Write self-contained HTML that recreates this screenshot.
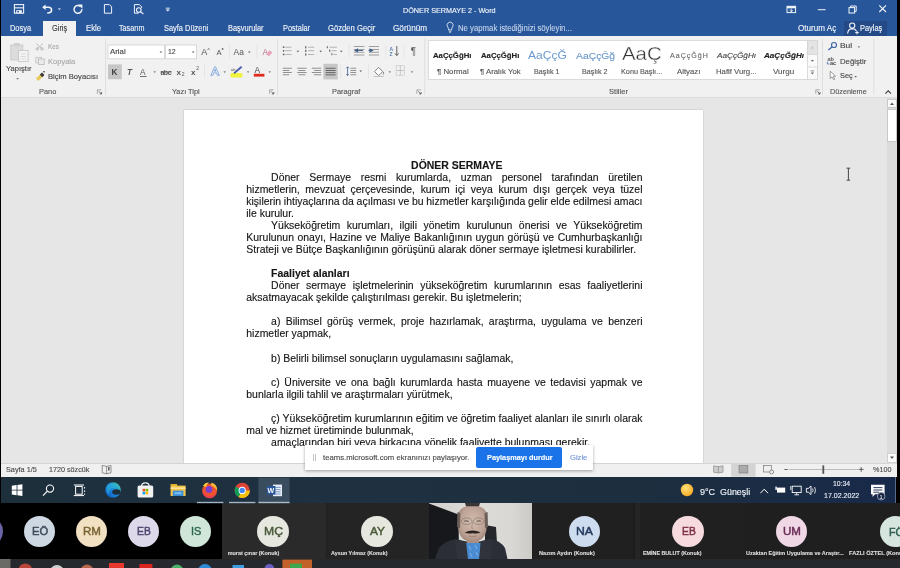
<!DOCTYPE html>
<html><head><meta charset="utf-8"><style>
html,body{margin:0;padding:0;}
body{width:900px;height:568px;overflow:hidden;position:relative;background:#000;font-family:"Liberation Sans", sans-serif;}
#root{position:absolute;left:0;top:0;width:900px;height:568px;overflow:hidden;background:#000;filter:blur(0.4px);}
</style></head><body><div id="root">
<div style="position:absolute;left:1px;top:0px;width:896px;height:36.4px;background:#27569a;"></div>
<div style="position:absolute;left:1px;top:36.4px;width:896px;height:60.6px;background:#f1f1f1;"></div>
<div style="position:absolute;left:1px;top:97.5px;width:896px;height:366px;background:#e6e6e6;"></div>
<div style="position:absolute;left:1px;top:463px;width:896px;height:14px;background:#f0f0f0;"></div>
<div style="position:absolute;left:1px;top:477px;width:895px;height:26.3px;background:linear-gradient(90deg,#1e2f3c 0%,#1f3141 40%,#1d2e3f 72%,#182a4a 100%);"></div>
<div style="position:absolute;left:0px;top:503px;width:900px;height:56px;background:#000;"></div>
<div style="position:absolute;left:222px;top:503px;width:104px;height:56px;background:#2a2a2a;"></div>
<div style="position:absolute;left:325.5px;top:503px;width:1.8px;height:56px;background:#202020;"></div>
<div style="position:absolute;left:327.3px;top:503px;width:102px;height:56px;background:#242424;"></div>
<div style="position:absolute;left:531.6px;top:503px;width:103px;height:56px;background:#202020;"></div>
<div style="position:absolute;left:633px;top:503px;width:2px;height:56px;background:#1b1b1b;"></div>
<div style="position:absolute;left:635px;top:503px;width:5px;height:56px;background:#252525;"></div>
<div style="position:absolute;left:640px;top:503px;width:103px;height:56px;background:#202020;"></div>
<div style="position:absolute;left:743px;top:503px;width:102px;height:56px;background:#1f1f1f;"></div>
<div style="position:absolute;left:845px;top:503px;width:55px;height:56px;background:#1f1f1f;"></div>
<div style="position:absolute;left:0px;top:559px;width:900px;height:9px;background:#25282c;"></div>
<div style="position:absolute;left:843.5px;top:21px;width:43px;height:14.5px;background:#234a86;"></div>
<div style="position:absolute;left:42.5px;top:21px;width:33.2px;height:16px;background:#f1f1f1;"></div>
<div style="position:absolute;left:1px;top:96.6px;width:896px;height:1px;background:#dddddd;"></div>
<div style="position:absolute;left:184px;top:110px;width:519px;height:353px;background:#ffffff;box-shadow:0 0 1.5px rgba(0,0,0,0.25);"></div>
<div style="position:absolute;left:1px;top:462.5px;width:886px;height:0.8px;background:#d4d4d4;"></div>
<div style="position:absolute;left:895px;top:477px;width:1px;height:26px;background:#5a6a88;"></div>
<div style="position:absolute;left:887px;top:97.5px;width:10px;height:366px;background:#dcdcdc;"></div>
<div style="position:absolute;left:887.3px;top:99.3px;width:9.5px;height:9px;background:#fafafa;border:0.6px solid #c8c8c8;box-sizing:border-box;"></div>
<div style="position:absolute;left:887.3px;top:108.6px;width:9.5px;height:33.4px;background:#ffffff;border:0.6px solid #c8c8c8;box-sizing:border-box;"></div>
<div style="position:absolute;left:887.3px;top:453px;width:9.5px;height:9.5px;background:#fafafa;border:0.6px solid #d0d0d0;box-sizing:border-box;"></div>
<div style="position:absolute;left:-27.9px;top:515.6999999999999px;width:31.2px;height:31.2px;background:#6b65a6;border-radius:50%;"></div>
<div style="position:absolute;left:24.1px;top:515.6999999999999px;width:31.2px;height:31.2px;background:#cdd8e3;border-radius:50%;"></div>
<div style="position:absolute;left:76.10000000000001px;top:515.6999999999999px;width:31.2px;height:31.2px;background:#f1e1c2;border-radius:50%;"></div>
<div style="position:absolute;left:128.1px;top:515.6999999999999px;width:31.2px;height:31.2px;background:#ddd8ea;border-radius:50%;"></div>
<div style="position:absolute;left:179.70000000000002px;top:515.6999999999999px;width:31.2px;height:31.2px;background:#d0e6d9;border-radius:50%;"></div>
<div style="position:absolute;left:257.4px;top:515.6999999999999px;width:31.2px;height:31.2px;background:#e6e8df;border-radius:50%;"></div>
<div style="position:absolute;left:361.4px;top:515.6999999999999px;width:31.2px;height:31.2px;background:#e6e8df;border-radius:50%;"></div>
<div style="position:absolute;left:568.6999999999999px;top:515.6999999999999px;width:31.2px;height:31.2px;background:#cddcee;border-radius:50%;"></div>
<div style="position:absolute;left:672.4px;top:515.6999999999999px;width:31.2px;height:31.2px;background:#f6dade;border-radius:50%;"></div>
<div style="position:absolute;left:776.1px;top:515.6999999999999px;width:31.2px;height:31.2px;background:#efd7e6;border-radius:50%;"></div>
<div style="position:absolute;left:879.9px;top:515.9px;width:31.2px;height:31.2px;background:#d6e6df;border-radius:50%;"></div>
<svg style="position:absolute;left:0;top:0" width="900" height="568" viewBox="0 0 900 568"><rect x="0" y="559" width="10.5" height="9" fill="#6a6a66"/><circle cx="25.3" cy="570.5" r="7" fill="#b8443a"/><circle cx="57" cy="572" r="7" fill="#cfcfcf"/><circle cx="87" cy="571" r="6.5" fill="#b8664a"/><rect x="109" y="563" width="15" height="6" fill="#e8372c"/><rect x="139.4" y="564" width="13" height="5" fill="#d8231e"/><circle cx="177" cy="571" r="6.5" fill="#49b06a"/><circle cx="205" cy="571" r="7" fill="#2d8bd6"/><rect x="232.5" y="565" width="11.5" height="4" fill="#3d9be0"/><circle cx="269.4" cy="569" r="5" fill="#6a5cc0"/><rect x="282.4" y="559.6" width="29.6" height="9" fill="#c2622a"/><rect x="290" y="563.6" width="12" height="5" fill="#3ea84c"/></svg>
<div style="position:absolute;left:429.2px;top:503.3px;width:102.4px;height:55.4px;overflow:hidden;background:#d6d5d1;">
<svg width="103" height="56" viewBox="0 0 103 56" style="position:absolute;left:0;top:0;filter:blur(0.6px)">
<defs>
<linearGradient id="wall" x1="0" y1="0" x2="1" y2="0"><stop offset="0" stop-color="#d2d1cd"/><stop offset="0.45" stop-color="#dedcd8"/><stop offset="0.8" stop-color="#d9d8d4"/><stop offset="1" stop-color="#cbcac6"/></linearGradient>
<radialGradient id="face" cx="0.5" cy="0.45" r="0.62"><stop offset="0" stop-color="#d2bcb0"/><stop offset="0.65" stop-color="#bea496"/><stop offset="1" stop-color="#9c8274"/></radialGradient>
</defs>
<rect x="0" y="0" width="103" height="56" fill="url(#wall)"/>
<path d="M0 0.5 L29.5 11.5 L30 56 L0 56 Z" fill="#17181b"/>
<path d="M56 22 L67 24 L68 40 L56 40 Z" fill="#26272b"/>
<path d="M6 56 L10 45 Q16 38 27 36 L37 38.5 L51 38.5 L61 35.5 Q72 38 76 45 L78.5 56 Z" fill="#2b2e36"/>
<path d="M36.6 40 L51.8 40 L51 56 L37.4 56 Z" fill="#4a8cd2"/>
<path d="M40 43 L42 47 M46 42 L48 46 M41 50 L43 54 M47 49 L49 53" stroke="#8fbbe8" stroke-width="0.8"/>
<path d="M26 37 L37 39 L39 56 L28 56 Z M62 36 L51.8 39 L50 56 L62 56 Z" fill="#30333b"/>
<path d="M38 33 L50 33 L50 40 L38 40 Z" fill="#a88e80"/>
<path d="M29 14 Q29 2.5 43.5 2.5 Q58 2.5 58 14 L57.4 27 Q55.5 38.5 43.5 38.8 Q31.5 38.5 29.6 27 Z" fill="url(#face)"/>
<path d="M36 0 L51 0 L50 3.2 L37 3.2 Z" fill="#3c3636"/>
<path d="M28.4 9 L28 24 L31 25 L31.4 10 Z M58.6 9 L59 24 L56 25 L55.6 10 Z" fill="#6a5e58"/>
<ellipse cx="37.6" cy="18.2" rx="5.4" ry="3.3" fill="none" stroke="#8c7a70" stroke-width="0.7"/>
<ellipse cx="49.6" cy="18.2" rx="5.4" ry="3.3" fill="none" stroke="#8c7a70" stroke-width="0.7"/>
<path d="M35.4 18.2 Q37.6 17.2 39.6 18.4 M47.6 18.4 Q49.6 17.2 51.8 18.2" stroke="#5a4a44" stroke-width="1" fill="none"/>
<path d="M43.6 19 L42.6 25 L44.6 25.4" stroke="#a08476" stroke-width="0.7" fill="none"/>
<path d="M35.6 29.6 Q43.6 25.4 51.6 29.6 Q48 31 43.6 30.2 Q39 31 35.6 29.6 Z" fill="#2c2321"/>
<path d="M39.5 33 Q43.6 34.2 47.8 33" stroke="#8f7465" stroke-width="0.7" fill="none"/>
</svg></div>
<svg style="position:absolute;left:889px;top:101px" width="6" height="5" viewBox="0 0 6 5"><path d="M1 4 L3 1.5 L5 4 Z" fill="#555"/></svg>
<svg style="position:absolute;left:889px;top:455px" width="6" height="5" viewBox="0 0 6 5"><path d="M1 1.5 L3 4 L5 1.5 Z" fill="#555"/></svg>
<svg style="position:absolute;left:0;top:0" width="900" height="100" viewBox="0 0 900 100"><rect x="14.4" y="4.6" width="9.2" height="8.6" fill="none" stroke="#f2f5fb" stroke-width="1.1"/><rect x="14.4" y="7.3" width="9.2" height="1.1" fill="#f2f5fb"/><rect x="16.2" y="10.2" width="5.6" height="3" fill="#f2f5fb"/><rect x="17.3" y="11" width="1.6" height="1.4" fill="#27569a"/><path d="M43.5 7.3 L48.3 7.3 Q51.6 7.3 51.6 10.1 Q51.6 12.9 48.3 12.9 L47.2 12.9" fill="none" stroke="#f2f5fb" stroke-width="1.5"/><path d="M42.2 7.3 L45.6 4.6 L45.6 10 Z" fill="#f2f5fb"/><path d="M57.8 8.4 L61 8.4 L59.4 10 Z" fill="#f2f5fb"/><path d="M80.6 6.6 A3.9 3.9 0 1 0 81.8 9.2" fill="none" stroke="#f2f5fb" stroke-width="1.5"/><path d="M78.2 4.6 L82.4 4.6 L82.4 8.8 Z" fill="#f2f5fb"/><path d="M104.4 4.6 L109.4 4.6 L111.6 6.8 L111.6 13.2 L104.4 13.2 Z" fill="none" stroke="#f2f5fb" stroke-width="1"/><path d="M138.6 13.2 L134.4 13.2 L134.4 4.6 L139.4 4.6 L141.6 6.8 L141.6 8" fill="none" stroke="#f2f5fb" stroke-width="1"/><circle cx="138.8" cy="10" r="2.3" fill="none" stroke="#f2f5fb" stroke-width="1.1"/><path d="M140.4 11.6 L143.4 14" stroke="#f2f5fb" stroke-width="1.2"/><rect x="165.8" y="7.7" width="4" height="0.9" fill="#f2f5fb"/><path d="M165.6 9.4 L169.9 9.4 L167.75 11.4 Z" fill="#f2f5fb"/><rect x="787" y="6.3" width="8.6" height="6.3" fill="none" stroke="#f2f5fb" stroke-width="1"/><rect x="787" y="6.3" width="8.6" height="2" fill="#f2f5fb"/><path d="M791.3 8.5 L791.3 12.4" stroke="#f2f5fb" stroke-width="0.8"/><path d="M789.6 10.2 L791.3 11.6 L793 10.2" fill="none" stroke="#f2f5fb" stroke-width="0.8"/><rect x="817.8" y="9.2" width="7.8" height="1" fill="#f2f5fb"/><rect x="849" y="7.6" width="5.6" height="5.4" fill="none" stroke="#f2f5fb" stroke-width="1"/><path d="M850.6 7.6 L850.6 6 L856.2 6 L856.2 11.4 L854.6 11.4" fill="none" stroke="#f2f5fb" stroke-width="1"/><path d="M879.3 5.3 L886 12 M886 5.3 L879.3 12" stroke="#f2f5fb" stroke-width="1.1"/><circle cx="852.2" cy="25.6" r="2.6" fill="none" stroke="#f2f5fb" stroke-width="1.1"/><path d="M847.6 33.6 Q848 28.8 852.2 28.6 Q855.4 28.8 856.4 31" fill="none" stroke="#f2f5fb" stroke-width="1.1"/><path d="M855.2 32.6 L858.8 32.6 M857 30.8 L857 34.4" stroke="#f2f5fb" stroke-width="1"/><path d="M448.6 30 Q448.6 28 447.6 26.8 A3 3 0 1 1 452.6 26.8 Q451.6 28 451.6 30 Z" fill="none" stroke="#dfe7f3" stroke-width="0.9"/><path d="M448.8 31.2 L451.4 31.2 M449.2 32.3 L451 32.3" stroke="#dfe7f3" stroke-width="0.8"/></svg>
<svg style="position:absolute;left:0;top:0" width="900" height="100" viewBox="0 0 900 100"><rect x="10.8" y="45" width="12" height="15" fill="#dcdcdc" stroke="#c6c6c6" stroke-width="0.8"/><rect x="14" y="43" width="5.6" height="3.4" fill="#cfcfcf" rx="1"/><rect x="18.5" y="50.5" width="9.6" height="11" fill="#f4f4f4" stroke="#c3c3c3" stroke-width="0.8"/><path d="M20.5 54 H26 M20.5 56.5 H26 M20.5 59 H26" stroke="#d0d0d0" stroke-width="0.7"/><path d="M16.2 78.2 L19 78.2 L17.6 79.6 Z" fill="#555555"/><path d="M36.2 43.5 L43 49.8 M43 43.5 L36.2 49.8" stroke="#b8b8b8" stroke-width="0.9"/><circle cx="37.3" cy="48.9" r="1.3" fill="none" stroke="#b8b8b8" stroke-width="0.8"/><circle cx="42" cy="48.9" r="1.3" fill="none" stroke="#b8b8b8" stroke-width="0.8"/><rect x="35.8" y="57.3" width="5.8" height="5.6" fill="#ececec" stroke="#c0c0c0" stroke-width="0.8"/><rect x="38.4" y="59" width="5.8" height="5.4" fill="#ececec" stroke="#b8b8b8" stroke-width="0.8"/><path d="M36 78.5 L41.6 73 L44 75.4 L38.4 81 Z" fill="#e8c95a"/><path d="M39.8 74.8 L42 72.6 L44.4 75 L42.2 77.2 Z" fill="#3a3a3a"/><path d="M43 71.8 L45 71.8" stroke="#3a3a3a" stroke-width="1"/><path d="M97.4 93.8 L97.4 89.8 L101.4 89.8" fill="none" stroke="#777" stroke-width="0.6"/><path d="M98.9 91.3 L101.60000000000001 94 M101.60000000000001 92 L101.60000000000001 94 L99.60000000000001 94" fill="none" stroke="#555" stroke-width="0.8"/><path d="M269.6 93.8 L269.6 89.8 L273.6 89.8" fill="none" stroke="#777" stroke-width="0.6"/><path d="M271.1 91.3 L273.8 94 M273.8 92 L273.8 94 L271.8 94" fill="none" stroke="#555" stroke-width="0.8"/><path d="M416.9 93.8 L416.9 89.8 L420.9 89.8" fill="none" stroke="#777" stroke-width="0.6"/><path d="M418.4 91.3 L421.09999999999997 94 M421.09999999999997 92 L421.09999999999997 94 L419.09999999999997 94" fill="none" stroke="#555" stroke-width="0.8"/><path d="M815.8 93.8 L815.8 89.8 L819.8 89.8" fill="none" stroke="#777" stroke-width="0.6"/><path d="M817.3 91.3 L820.0 94 M820.0 92 L820.0 94 L818.0 94" fill="none" stroke="#555" stroke-width="0.8"/><rect x="105" y="39" width="0.8" height="56" fill="#dadada"/><rect x="277.2" y="39" width="0.8" height="56" fill="#dadada"/><rect x="424.4" y="39" width="0.8" height="56" fill="#dadada"/><rect x="822.2" y="39" width="0.8" height="56" fill="#dadada"/><rect x="873.5" y="39" width="0.8" height="56" fill="#dadada"/><rect x="108" y="45" width="56.5" height="13.8" fill="#fff" stroke="#d0d0d0" stroke-width="0.8"/><rect x="165.6" y="45" width="31" height="13.8" fill="#fff" stroke="#d0d0d0" stroke-width="0.8"/><path d="M159.6 51.6 L162.2 51.6 L160.9 53.0 Z" fill="#555555"/><path d="M191.9 51.6 L194.5 51.6 L193.20000000000002 53.0 Z" fill="#555555"/><text x="201.2" y="55.2" font-size="9" font-family="Liberation Sans" fill="#555555">A</text><path d="M207.6 49.8 L208.6 48.4 L209.6 49.8" fill="none" stroke="#555555" stroke-width="0.7"/><text x="216.6" y="55.2" font-size="7.6" font-family="Liberation Sans" fill="#555555">A</text><path d="M221.6 49 L223.6 49 M222.6 48 L222.6 50" stroke="#555555" stroke-width="0.7"/><rect x="229.2" y="45" width="0.6" height="13" fill="#dedede"/><rect x="256.6" y="45" width="0.6" height="13" fill="#dedede"/><rect x="204.2" y="64" width="0.6" height="14" fill="#dedede"/><text x="233.6" y="55" font-size="8.4" font-family="Liberation Sans" fill="#555555">Aa</text><path d="M248 51.6 L250.6 51.6 L249.3 53 Z" fill="#555555"/><text x="262.4" y="55" font-size="8.4" font-family="Liberation Sans" fill="#b76f86">A</text><path d="M266 54.8 L269.4 50.2 L272.4 52.4 L269.4 56 Z" fill="#e6a5b9"/><rect x="108" y="64.4" width="13.8" height="14.8" fill="#c6c6c6"/><text x="111.4" y="75.2" font-size="8.2" font-weight="bold" font-family="Liberation Sans" fill="#3f3f3f">K</text><text x="127" y="75.2" font-size="8.2" font-style="italic" font-weight="bold" font-family="Liberation Sans" fill="#555555">T</text><text x="140" y="74.6" font-size="8.2" font-family="Liberation Sans" fill="#555555">A</text><rect x="140" y="76" width="6.6" height="0.8" fill="#555555"/><path d="M153.4 71.4 L156 71.4 L154.7 72.8 Z" fill="#555555"/><text x="160.4" y="74.6" font-size="7" font-weight="bold" font-family="Liberation Sans" fill="#555555" textLength="11.2">abc</text><rect x="160.4" y="71.6" width="11.4" height="0.7" fill="#555555"/><text x="176.6" y="74.8" font-size="8" font-weight="bold" font-family="Liberation Sans" fill="#555555">x</text><text x="181.8" y="76.4" font-size="5" font-family="Liberation Sans" fill="#555555">2</text><text x="191" y="74.8" font-size="8" font-weight="bold" font-family="Liberation Sans" fill="#555555">x</text><text x="196.2" y="70" font-size="5" font-family="Liberation Sans" fill="#555555">2</text><path d="M210.8 75.4 L214.6 66.8 L215.6 66.8 L219.4 75.4 L217.4 75.4 L216.4 72.8 L213.8 72.8 L212.8 75.4 Z M214.4 71.2 L215.8 71.2 L215.1 69.2 Z" fill="#e6eef8" stroke="#6d9bd4" stroke-width="0.75" stroke-linejoin="round"/><path d="M223.4 71.4 L226 71.4 L224.7 72.8 Z" fill="#555"/><rect x="230.4" y="73" width="12" height="4.4" fill="#f2f23a" rx="1.5"/><path d="M234 73.4 L241.6 66.8" stroke="#4a5aa8" stroke-width="1.8"/><text x="230.8" y="70.6" font-size="4.2" font-family="Liberation Sans" fill="#555">ab</text><path d="M246.8 71.4 L249.4 71.4 L248.1 72.8 Z" fill="#555"/><text x="254.6" y="73.2" font-size="8.4" font-family="Liberation Sans" fill="#444">A</text><rect x="253.8" y="73.8" width="10.6" height="2.8" fill="#e02a1e"/><path d="M268.4 71.4 L271 71.4 L269.7 72.8 Z" fill="#555"/><circle cx="283.6" cy="47.2" r="0.9" fill="#666"/><circle cx="283.6" cy="50.800000000000004" r="0.9" fill="#666"/><circle cx="283.6" cy="54.400000000000006" r="0.9" fill="#666"/><rect x="285.4" y="46.8" width="6.2" height="0.7" fill="#9a9a9a"/><rect x="285.4" y="50.4" width="6.2" height="0.7" fill="#9a9a9a"/><rect x="285.4" y="54.0" width="6.2" height="0.7" fill="#9a9a9a"/><path d="M296.6 50.8 L299.2 50.8 L297.9 52.2 Z" fill="#555"/><rect x="305" y="46.2" width="1.4" height="2.2" fill="#777"/><rect x="305" y="49.800000000000004" width="1.4" height="2.2" fill="#777"/><rect x="305" y="53.400000000000006" width="1.4" height="2.2" fill="#777"/><rect x="308" y="46.8" width="6.2" height="0.7" fill="#9a9a9a"/><rect x="308" y="50.4" width="6.2" height="0.7" fill="#9a9a9a"/><rect x="308" y="54.0" width="6.2" height="0.7" fill="#9a9a9a"/><path d="M319.4 50.8 L322 50.8 L320.7 52.2 Z" fill="#555"/><rect x="326.8" y="46.2" width="1.2" height="2" fill="#777"/><rect x="329.4" y="46.8" width="7.4" height="0.7" fill="#9a9a9a"/><rect x="329" y="49.6" width="1.3" height="2.2" fill="#777"/><rect x="331.6" y="50.4" width="5" height="0.7" fill="#9a9a9a"/><rect x="331.2" y="53.2" width="1.2" height="2" fill="#777"/><rect x="333.4" y="54" width="3.4" height="0.7" fill="#9a9a9a"/><path d="M340 50.8 L342.6 50.8 L341.3 52.2 Z" fill="#555"/><rect x="348.8" y="45" width="0.6" height="13" fill="#dedede"/><rect x="385.6" y="45" width="0.6" height="13" fill="#dedede"/><rect x="403.8" y="45" width="0.6" height="13" fill="#dedede"/><rect x="353.8" y="46.2" width="10.6" height="0.8" fill="#8a8a8a"/><rect x="353.8" y="49.0" width="10.6" height="0.8" fill="#8a8a8a"/><rect x="353.8" y="51.800000000000004" width="10.6" height="0.8" fill="#8a8a8a"/><rect x="353.8" y="54.6" width="10.6" height="0.8" fill="#8a8a8a"/><path d="M354 50.4 L358 48.2 L358 52.6 Z" fill="#3d5f8f"/><rect x="357" y="50" width="6" height="0.9" fill="#3d5f8f"/><rect x="368.8" y="46.2" width="10.2" height="0.8" fill="#8a8a8a"/><rect x="368.8" y="49.0" width="10.2" height="0.8" fill="#8a8a8a"/><rect x="368.8" y="51.800000000000004" width="10.2" height="0.8" fill="#8a8a8a"/><rect x="368.8" y="54.6" width="10.2" height="0.8" fill="#8a8a8a"/><path d="M373.6 50.4 L369.6 48.2 L369.6 52.6 Z" fill="#3d5f8f"/><rect x="368.6" y="50" width="4" height="0.9" fill="#3d5f8f"/><text x="389.4" y="50.6" font-size="5" font-weight="bold" font-family="Liberation Sans" fill="#5a7bb0">A</text><text x="389.6" y="56" font-size="5" font-weight="bold" font-family="Liberation Sans" fill="#5a7bb0">Z</text><path d="M396.8 46 L396.8 55.4 M395 53.4 L396.8 55.6 L398.6 53.4" fill="none" stroke="#555" stroke-width="0.9"/><text x="410.8" y="55.4" font-size="10" font-family="Liberation Sans" fill="#5a5a5a">¶</text><rect x="282.8" y="67.8" width="9" height="0.8" fill="#7a7a7a"/><rect x="282.8" y="70" width="6.4" height="0.8" fill="#7a7a7a"/><rect x="282.8" y="72.2" width="9" height="0.8" fill="#7a7a7a"/><rect x="282.8" y="74.4" width="6.4" height="0.8" fill="#7a7a7a"/><rect x="297.2" y="67.8" width="9.4" height="0.8" fill="#7a7a7a"/><rect x="298.4" y="70" width="7" height="0.8" fill="#7a7a7a"/><rect x="297.2" y="72.2" width="9.4" height="0.8" fill="#7a7a7a"/><rect x="298.4" y="74.4" width="7" height="0.8" fill="#7a7a7a"/><rect x="311.8" y="67.8" width="9.4" height="0.8" fill="#7a7a7a"/><rect x="314" y="70" width="7.2" height="0.8" fill="#7a7a7a"/><rect x="311.8" y="72.2" width="9.4" height="0.8" fill="#7a7a7a"/><rect x="314" y="74.4" width="7.2" height="0.8" fill="#7a7a7a"/><rect x="323.4" y="63.8" width="14.4" height="15.6" fill="#c6c6c6"/><rect x="325.6" y="67.8" width="10" height="0.9" fill="#5a5a5a"/><rect x="325.6" y="70.0" width="10" height="0.9" fill="#5a5a5a"/><rect x="325.6" y="72.2" width="10" height="0.9" fill="#5a5a5a"/><rect x="325.6" y="74.39999999999999" width="10" height="0.9" fill="#5a5a5a"/><rect x="340" y="64" width="0.6" height="14" fill="#dedede"/><rect x="368.2" y="64" width="0.6" height="14" fill="#dedede"/><path d="M347.6 67 L347.6 75.4 M346.4 68.2 L347.6 66.8 L348.8 68.2 M346.4 74.2 L347.6 75.6 L348.8 74.2" fill="none" stroke="#3d5f8f" stroke-width="0.8"/><rect x="350.4" y="67.8" width="5.8" height="0.8" fill="#7a7a7a"/><rect x="350.4" y="70.0" width="5.8" height="0.8" fill="#7a7a7a"/><rect x="350.4" y="72.2" width="5.8" height="0.8" fill="#7a7a7a"/><rect x="350.4" y="74.39999999999999" width="5.8" height="0.8" fill="#7a7a7a"/><path d="M359.4 70.6 L362 70.6 L360.7 72 Z" fill="#555"/><path d="M374.6 71.6 L378.6 67.4 L382.8 71.6 L378.6 75.6 Z" fill="#fff" stroke="#666" stroke-width="0.8"/><path d="M383.4 72 Q384 74 383.2 74.6" stroke="#666" stroke-width="0.8" fill="none"/><rect x="373.4" y="76" width="10.6" height="0.8" fill="#bbb"/><path d="M388.4 71.4 L391 71.4 L389.7 72.8 Z" fill="#555"/><rect x="396.2" y="65.6" width="8.2" height="9.8" fill="none" stroke="#aaa" stroke-width="0.6" stroke-dasharray="1 0.6"/><path d="M400.3 65.6 V75.4 M396.2 70.5 H404.4" stroke="#aaa" stroke-width="0.6"/><path d="M410.6 71.4 L413.2 71.4 L411.9 72.8 Z" fill="#555"/><rect x="428.4" y="40.6" width="389" height="38.8" fill="#fff" stroke="#d4d4d4" stroke-width="0.8"/><rect x="807.4" y="40.6" width="10" height="38.8" fill="#fafafa" stroke="#d4d4d4" stroke-width="0.8"/><rect x="807.4" y="40.6" width="10" height="13.8" fill="#e4e4e4" stroke="#d4d4d4" stroke-width="0.8"/><path d="M807.4 67 H817.4" stroke="#d4d4d4" stroke-width="0.8"/><path d="M810.8 48.4 L812.4 46.6 L814 48.4 Z" fill="#bbb"/><path d="M810.8 60 L814 60 L812.4 61.8 Z" fill="#666"/><rect x="810.6" y="70.6" width="3.6" height="0.7" fill="#666"/><path d="M810.8 72.6 L814 72.6 L812.4 74.4 Z" fill="#666"/><circle cx="834" cy="45" r="2.5" fill="none" stroke="#3f69a6" stroke-width="1.2"/><path d="M832.2 46.8 L828.4 50" stroke="#3f69a6" stroke-width="1.5"/><path d="M857.6 46.4 L860.2 46.4 L858.9 47.8 Z" fill="#555"/><text x="827.4" y="60.6" font-size="5.6" font-weight="bold" font-family="Liberation Sans" fill="#5a5a5a">ab</text><text x="830" y="65.2" font-size="5.6" font-weight="bold" font-family="Liberation Sans" fill="#4a4a4a">ac</text><path d="M827.4 61.6 L827.4 64 L829.4 64" fill="none" stroke="#3f69a6" stroke-width="0.8"/><path d="M830.2 71.2 L830.2 78.6 L832 76.8 L833.6 79.8 L834.8 79.2 L833.2 76.2 L835.6 76.2 Z" fill="#fff" stroke="#777" stroke-width="0.7"/><path d="M854.4 76 L857 76 L855.7 77.4 Z" fill="#555"/><path d="M885.4 93.6 L888.2 90.8 L891 93.6" fill="none" stroke="#444" stroke-width="1.1"/></svg>
<svg style="position:absolute;left:0;top:0" width="900" height="568" viewBox="0 0 900 568"><path d="M848.4 168.4 V180 M846.6 168.2 H850.2 M846.6 180.2 H850.2" stroke="#333" stroke-width="0.9"/><path d="M102.2 465.4 L106.6 466.4 L106.6 473.8 L102.2 472.8 Z M106.6 466.4 L111 465.4 L111 472.8 L106.6 473.8" fill="none" stroke="#777" stroke-width="0.8"/><rect x="108" y="467" width="1.6" height="3.6" fill="#666"/><rect x="731.2" y="463.2" width="24.4" height="13.5" fill="#d4d4d4"/><path d="M713.6 465.8 L718.3 466.6 L718.3 473 L713.6 472.2 Z M718.3 466.6 L723 465.8 L723 472.2 L718.3 473" fill="#ccc" stroke="#8a8a8a" stroke-width="0.7"/><rect x="739" y="465.6" width="8.8" height="7.4" fill="#aaa" stroke="#777" stroke-width="0.6"/><rect x="763.4" y="465.6" width="8" height="6.4" fill="#eee" stroke="#777" stroke-width="0.7"/><circle cx="771.6" cy="472" r="2" fill="#eee" stroke="#666" stroke-width="0.7"/><rect x="784.4" y="469" width="3.4" height="0.9" fill="#555"/><rect x="789" y="469.2" width="69.6" height="0.6" fill="#9a9a9a"/><rect x="822.4" y="465.4" width="1.8" height="8.4" fill="#555"/><path d="M858.8 469.4 H863.6 M861.2 467 V471.8" stroke="#555" stroke-width="0.9"/></svg>
<svg style="position:absolute;left:0;top:0" width="900" height="568" viewBox="0 0 900 568"><path d="M11.8 485.8 L16.6 485 L16.6 489.8 L11.8 489.8 Z M17.4 484.9 L22.4 484.2 L22.4 489.8 L17.4 489.8 Z M11.8 490.6 L16.6 490.6 L16.6 495.2 L11.8 494.6 Z M17.4 490.6 L22.4 490.6 L22.4 496 L17.4 495.3 Z" fill="#ffffff"/><circle cx="50" cy="488.6" r="3.6" fill="none" stroke="#ffffff" stroke-width="1.1"/><path d="M47.4 491.2 L43 495.6" stroke="#ffffff" stroke-width="1.2"/><rect x="75.6" y="486.4" width="6.6" height="7.8" fill="none" stroke="#ffffff" stroke-width="1"/><path d="M73.8 485 H84 M73.8 495.6 H84 M84.6 487 V488.6 M84.6 490.4 V492 M84.6 493.6 V494.8" stroke="#ffffff" stroke-width="1"/><defs><linearGradient id="edg" x1="0" y1="0" x2="1" y2="1"><stop offset="0" stop-color="#38c98b"/><stop offset="0.5" stop-color="#1d9bd8"/><stop offset="1" stop-color="#1660c2"/></linearGradient><radialGradient id="ff" cx="0.5" cy="0.5" r="0.55"><stop offset="0" stop-color="#8e3fcf"/><stop offset="0.35" stop-color="#e8356a"/><stop offset="0.7" stop-color="#ff7a2a"/><stop offset="1" stop-color="#ffc43a"/></radialGradient></defs><defs><linearGradient id="edg2" x1="0" y1="1" x2="1" y2="0"><stop offset="0" stop-color="#0d52b8"/><stop offset="0.55" stop-color="#1d8fe0"/><stop offset="1" stop-color="#52d07a"/></linearGradient></defs><circle cx="113" cy="490" r="7.8" fill="url(#edg2)"/><ellipse cx="116.4" cy="492" rx="4.2" ry="2.8" fill="#1c2d37"/><path d="M106.5 487 Q110 482.8 115 483.6 Q119.5 484.8 120.6 489 Q116 486.5 111.5 488.6 Q108.5 490.4 108.8 494.6 Q106 492 106.5 487 Z" fill="#2fb6d8" opacity="0.55"/><rect x="137.6" y="485.6" width="15.6" height="12" rx="1.5" fill="#f2f2f2"/><path d="M141.6 486 Q141.6 482.8 145.4 482.8 Q149.2 482.8 149.2 486" fill="none" stroke="#f2f2f2" stroke-width="1.2"/><rect x="142.6" y="488.8" width="2.6" height="2.6" fill="#f25022"/><rect x="145.6" y="488.8" width="2.6" height="2.6" fill="#7fba00"/><rect x="142.6" y="491.8" width="2.6" height="2.6" fill="#00a4ef"/><rect x="145.6" y="491.8" width="2.6" height="2.6" fill="#ffb900"/><rect x="170.6" y="484" width="6.5" height="2.2" fill="#e0ac2c"/><rect x="170.6" y="485.6" width="15" height="10.4" fill="#f3c54a"/><rect x="170.6" y="487.4" width="15" height="1.6" fill="#fbe39a"/><rect x="172.8" y="490.6" width="10.6" height="5.4" fill="#3d8fd6"/><rect x="174.6" y="492.2" width="7" height="2" fill="#7cc0f0"/><circle cx="209.6" cy="490.8" r="7.4" fill="#f0522e"/><path d="M202.2 490.8 A7.4 7.4 0 0 0 217 490.8 Q216.6 494.6 212 496 Q206 497 203.4 492 Z" fill="#e8336a" opacity="0.6"/><path d="M211.5 482.6 Q217.6 484.6 217.2 491 Q215 486.4 211 486 Z" fill="#ffb636"/><circle cx="209" cy="489.4" r="3.4" fill="#7a3ed2"/><path d="M203 486 Q205 482.5 209 482.6 Q206.4 484.4 206.4 487 Z" fill="#ffc940"/><rect x="197" y="501.8" width="26.4" height="1.4" fill="#9fb4c6"/><circle cx="242.2" cy="490.4" r="7.6" fill="#db4437"/><path d="M242.2 490.4 L249.8 490.4 A7.6 7.6 0 0 1 238.4 497 Z" fill="#f4c20d"/><path d="M242.2 490.4 L238.4 497 A7.6 7.6 0 0 1 235.6 486.6 Z" fill="#0f9d58"/><circle cx="242.2" cy="490.4" r="3.6" fill="#fff"/><circle cx="242.2" cy="490.4" r="2.7" fill="#4285f4"/><rect x="229" y="501.8" width="26.4" height="1.4" fill="#9fb4c6"/><rect x="258.4" y="477.6" width="31.2" height="25" fill="#3a4d5e"/><rect x="258.4" y="501.8" width="31.2" height="1.4" fill="#a9bccc"/><rect x="273" y="484.6" width="9" height="11.6" fill="#e8eef6"/><path d="M274.6 487.4 H280.6 M274.6 489.6 H280.6 M274.6 491.8 H280.6 M274.6 494 H280.6" stroke="#5b82c2" stroke-width="0.8"/><rect x="266.8" y="486" width="8.6" height="8.6" fill="#2b579a"/><text x="267.4" y="493.4" font-size="7" font-weight="bold" font-family="Liberation Sans" fill="#fff">W</text><defs><radialGradient id="sun" cx="0.4" cy="0.35" r="0.7"><stop offset="0" stop-color="#ffe27a"/><stop offset="1" stop-color="#f5a623"/></radialGradient></defs><circle cx="687" cy="490" r="6.2" fill="url(#sun)"/><path d="M760.4 493.2 L764.2 489.2 L768 493.2" fill="none" stroke="#ffffff" stroke-width="1"/><rect x="777" y="487.6" width="8.2" height="5" fill="#ffffff"/><rect x="775.4" y="486.6" width="1.4" height="3.4" fill="#ffffff"/><rect x="792.2" y="486.2" width="9" height="6.4" fill="none" stroke="#ffffff" stroke-width="0.9"/><path d="M796.7 492.6 V494.6 M794.4 494.8 H799" stroke="#ffffff" stroke-width="0.9"/><path d="M790.8 486 L790.8 490" stroke="#ffffff" stroke-width="0.9"/><path d="M806.4 488.4 H808.4 L811 486 V494.6 L808.4 492.2 H806.4 Z" fill="none" stroke="#ffffff" stroke-width="0.9"/><path d="M812.6 488.4 Q813.6 490.3 812.6 492.2 M814.6 487 Q816.4 490.3 814.6 493.6" fill="none" stroke="#ffffff" stroke-width="0.8"/><path d="M871 484.8 H884.6 V494.2 H875 L872.6 497 V494.2 H871 Z" fill="#ffffff"/><path d="M873.4 487.6 H882.4 M873.4 490 H882.4 M873.4 492.2 H879" stroke="#1a2846" stroke-width="0.9"/><circle cx="881.2" cy="496.2" r="3.8" fill="#1a2846" stroke="#9aa3b5" stroke-width="0.9"/><text x="879.6" y="498.8" font-size="5.6" font-family="Liberation Sans" fill="#fff">1</text></svg>
<div id="t53" style="position:absolute;left:32.05px;top:526.000px;font-size:10.89px;line-height:10.89px;color:#3d4b5a;font-weight:normal;font-style:normal;white-space:nowrap;transform:scaleX(1.0305);transform-origin:0 0;-webkit-text-stroke:0.45px #3d4b5a;">EÖ</div>
<div id="t54" style="position:absolute;left:83.20px;top:526.000px;font-size:10.89px;line-height:10.89px;color:#7a6233;font-weight:normal;font-style:normal;white-space:nowrap;transform:scaleX(1.0592);transform-origin:0 0;-webkit-text-stroke:0.45px #7a6233;">RM</div>
<div id="t55" style="position:absolute;left:137.20px;top:526.000px;font-size:10.89px;line-height:10.89px;color:#4d4670;font-weight:normal;font-style:normal;white-space:nowrap;transform:scaleX(0.9528);transform-origin:0 0;-webkit-text-stroke:0.45px #4d4670;">EB</div>
<div id="t56" style="position:absolute;left:190.55px;top:526.000px;font-size:10.89px;line-height:10.89px;color:#2f6a4e;font-weight:normal;font-style:normal;white-space:nowrap;transform:scaleX(1.0096);transform-origin:0 0;-webkit-text-stroke:0.45px #2f6a4e;">IS</div>
<div id="t57" style="position:absolute;left:264.00px;top:526.000px;font-size:10.89px;line-height:10.89px;color:#4a5a3a;font-weight:normal;font-style:normal;white-space:nowrap;transform:scaleX(1.1215);transform-origin:0 0;-webkit-text-stroke:0.45px #4a5a3a;">MÇ</div>
<div id="t58" style="position:absolute;left:370.00px;top:526.000px;font-size:10.89px;line-height:10.89px;color:#4a5a3a;font-weight:normal;font-style:normal;white-space:nowrap;transform:scaleX(1.0911);transform-origin:0 0;-webkit-text-stroke:0.45px #4a5a3a;">AY</div>
<div id="t59" style="position:absolute;left:576.30px;top:526.000px;font-size:10.89px;line-height:10.89px;color:#233a5e;font-weight:normal;font-style:normal;white-space:nowrap;transform:scaleX(1.1238);transform-origin:0 0;-webkit-text-stroke:0.45px #233a5e;">NA</div>
<div id="t60" style="position:absolute;left:681.50px;top:526.000px;font-size:10.89px;line-height:10.89px;color:#7d2f47;font-weight:normal;font-style:normal;white-space:nowrap;transform:scaleX(0.9528);transform-origin:0 0;-webkit-text-stroke:0.45px #7d2f47;">EB</div>
<div id="t61" style="position:absolute;left:783.20px;top:526.000px;font-size:10.89px;line-height:10.89px;color:#6b2d56;font-weight:normal;font-style:normal;white-space:nowrap;transform:scaleX(1.0592);transform-origin:0 0;-webkit-text-stroke:0.45px #6b2d56;">UM</div>
<div id="t62" style="position:absolute;left:888.50px;top:527.000px;font-size:10.89px;line-height:10.89px;color:#2f5d4f;font-weight:normal;font-style:normal;white-space:nowrap;transform:scaleX(0.9833);transform-origin:0 0;-webkit-text-stroke:0.45px #2f5d4f;">FÖ</div>
<div id="t63" style="position:absolute;left:227.70px;top:551.000px;font-size:5.45px;line-height:5.45px;color:#dedede;font-weight:bold;font-style:normal;white-space:nowrap;-webkit-text-stroke:0.12px #dedede;">murat çınar (Konuk)</div>
<div id="t64" style="position:absolute;left:331.30px;top:551.000px;font-size:5.45px;line-height:5.45px;color:#dedede;font-weight:bold;font-style:normal;white-space:nowrap;transform:scaleX(0.9881);transform-origin:0 0;-webkit-text-stroke:0.12px #dedede;">Aysun Yılmaz (Konuk)</div>
<div id="t65" style="position:absolute;left:538.70px;top:551.000px;font-size:5.45px;line-height:5.45px;color:#dedede;font-weight:bold;font-style:normal;white-space:nowrap;transform:scaleX(1.0270);transform-origin:0 0;-webkit-text-stroke:0.12px #dedede;">Nazım Aydın (Konuk)</div>
<div id="t66" style="position:absolute;left:642.70px;top:551.000px;font-size:5.45px;line-height:5.45px;color:#dedede;font-weight:bold;font-style:normal;white-space:nowrap;transform:scaleX(0.9869);transform-origin:0 0;-webkit-text-stroke:0.12px #dedede;">EMİNE BULUT (Konuk)</div>
<div id="t67" style="position:absolute;left:746.00px;top:551.000px;font-size:5.45px;line-height:5.45px;color:#dedede;font-weight:bold;font-style:normal;white-space:nowrap;transform:scaleX(1.0065);transform-origin:0 0;-webkit-text-stroke:0.12px #dedede;">Uzaktan Eğitim Uygulama ve Araştır...</div>
<div id="t68" style="position:absolute;left:849.30px;top:551.000px;font-size:5.45px;line-height:5.45px;color:#dedede;font-weight:bold;font-style:normal;white-space:nowrap;transform:scaleX(1.0365);transform-origin:0 0;-webkit-text-stroke:0.12px #dedede;">FAZLI ÖZTEL (Konuk)</div>
<div style="position:absolute;left:271.1px;top:160.65px;width:371.4px;font-size:10.46px;line-height:10.46px;color:#151515;-webkit-text-stroke:0.12px #151515;white-space:nowrap;text-align:center;font-weight:bold;word-spacing:0px">DÖNER SERMAYE</div>
<div style="position:absolute;left:271.1px;top:172.71px;width:371.4px;font-size:10.46px;line-height:10.46px;color:#151515;-webkit-text-stroke:0.12px #151515;white-space:nowrap;text-align:justify;text-align-last:justify;font-weight:normal;word-spacing:0px">Döner Sermaye resmi kurumlarda, uzman personel tarafından üretilen</div>
<div style="position:absolute;left:246.3px;top:184.77px;width:396.2px;font-size:10.46px;line-height:10.46px;color:#151515;-webkit-text-stroke:0.12px #151515;white-space:nowrap;text-align:justify;text-align-last:justify;font-weight:normal;word-spacing:0px">hizmetlerin, mevzuat çerçevesinde, kurum içi veya kurum dışı gerçek veya tüzel</div>
<div style="position:absolute;left:246.3px;top:196.83px;width:396.2px;font-size:10.46px;line-height:10.46px;color:#151515;-webkit-text-stroke:0.12px #151515;white-space:nowrap;text-align:justify;text-align-last:justify;font-weight:normal;word-spacing:-0.25px">kişilerin ihtiyaçlarına da açılması ve bu hizmetler karşılığında gelir elde edilmesi amacı</div>
<div style="position:absolute;left:246.3px;top:208.89px;width:396.2px;font-size:10.46px;line-height:10.46px;color:#151515;-webkit-text-stroke:0.12px #151515;white-space:nowrap;font-weight:normal;word-spacing:0px">ile kurulur.</div>
<div style="position:absolute;left:271.1px;top:220.95px;width:371.4px;font-size:10.46px;line-height:10.46px;color:#151515;-webkit-text-stroke:0.12px #151515;white-space:nowrap;text-align:justify;text-align-last:justify;font-weight:normal;word-spacing:0px">Yükseköğretim kurumları, ilgili yönetim kurulunun önerisi ve Yükseköğretim</div>
<div style="position:absolute;left:246.3px;top:233.01px;width:396.2px;font-size:10.46px;line-height:10.46px;color:#151515;-webkit-text-stroke:0.12px #151515;white-space:nowrap;text-align:justify;text-align-last:justify;font-weight:normal;word-spacing:0px">Kurulunun onayı, Hazine ve Maliye Bakanlığının uygun görüşü ve Cumhurbaşkanlığı</div>
<div style="position:absolute;left:246.3px;top:245.07px;width:396.2px;font-size:10.46px;line-height:10.46px;color:#151515;-webkit-text-stroke:0.12px #151515;white-space:nowrap;font-weight:normal;word-spacing:0px">Strateji ve Bütçe Başkanlığının görüşünü alarak döner sermaye işletmesi kurabilirler.</div>
<div style="position:absolute;left:271.1px;top:269.19px;width:371.4px;font-size:10.46px;line-height:10.46px;color:#151515;-webkit-text-stroke:0.12px #151515;white-space:nowrap;font-weight:bold;word-spacing:0px">Faaliyet alanları</div>
<div style="position:absolute;left:271.1px;top:281.25px;width:371.4px;font-size:10.46px;line-height:10.46px;color:#151515;-webkit-text-stroke:0.12px #151515;white-space:nowrap;text-align:justify;text-align-last:justify;font-weight:normal;word-spacing:0px">Döner sermaye işletmelerinin yükseköğretim kurumlarının esas faaliyetlerini</div>
<div style="position:absolute;left:246.3px;top:293.31px;width:396.2px;font-size:10.46px;line-height:10.46px;color:#151515;-webkit-text-stroke:0.12px #151515;white-space:nowrap;font-weight:normal;word-spacing:0px">aksatmayacak şekilde çalıştırılması gerekir. Bu işletmelerin;</div>
<div style="position:absolute;left:271.1px;top:317.43px;width:371.4px;font-size:10.46px;line-height:10.46px;color:#151515;-webkit-text-stroke:0.12px #151515;white-space:nowrap;text-align:justify;text-align-last:justify;font-weight:normal;word-spacing:0px">a) Bilimsel görüş vermek, proje hazırlamak, araştırma, uygulama ve benzeri</div>
<div style="position:absolute;left:246.3px;top:329.49px;width:396.2px;font-size:10.46px;line-height:10.46px;color:#151515;-webkit-text-stroke:0.12px #151515;white-space:nowrap;font-weight:normal;word-spacing:0px">hizmetler yapmak,</div>
<div style="position:absolute;left:271.1px;top:353.61px;width:371.4px;font-size:10.46px;line-height:10.46px;color:#151515;-webkit-text-stroke:0.12px #151515;white-space:nowrap;font-weight:normal;word-spacing:0px">b) Belirli bilimsel sonuçların uygulamasını sağlamak,</div>
<div style="position:absolute;left:271.1px;top:377.73px;width:371.4px;font-size:10.46px;line-height:10.46px;color:#151515;-webkit-text-stroke:0.12px #151515;white-space:nowrap;text-align:justify;text-align-last:justify;font-weight:normal;word-spacing:0px">c) Üniversite ve ona bağlı kurumlarda hasta muayene ve tedavisi yapmak ve</div>
<div style="position:absolute;left:246.3px;top:389.79px;width:396.2px;font-size:10.46px;line-height:10.46px;color:#151515;-webkit-text-stroke:0.12px #151515;white-space:nowrap;font-weight:normal;word-spacing:0px">bunlarla ilgili tahlil ve araştırmaları yürütmek,</div>
<div style="position:absolute;left:271.1px;top:413.91px;width:371.4px;font-size:10.46px;line-height:10.46px;color:#151515;-webkit-text-stroke:0.12px #151515;white-space:nowrap;text-align:justify;text-align-last:justify;font-weight:normal;word-spacing:0px">ç) Yükseköğretim kurumlarının eğitim ve öğretim faaliyet alanları ile sınırlı olarak</div>
<div style="position:absolute;left:246.3px;top:425.97px;width:396.2px;font-size:10.46px;line-height:10.46px;color:#151515;-webkit-text-stroke:0.12px #151515;white-space:nowrap;font-weight:normal;word-spacing:0px">mal ve hizmet üretiminde bulunmak,</div>
<div style="position:absolute;left:271.1px;top:438.03px;width:371.4px;font-size:10.46px;line-height:10.46px;color:#151515;-webkit-text-stroke:0.12px #151515;white-space:nowrap;font-weight:normal;word-spacing:0px">amaçlarından biri veya birkaçına yönelik faaliyette bulunması gerekir.</div>
<div id="t0" style="position:absolute;left:402.70px;top:7.000px;font-size:7.26px;line-height:7.26px;color:#f4f7fb;font-weight:normal;font-style:normal;white-space:nowrap;transform:scaleX(0.9977);transform-origin:0 0;-webkit-text-stroke:0.12px #f4f7fb;">DÖNER SERMAYE 2 - Word</div>
<div id="t1" style="position:absolute;left:10.00px;top:25.000px;font-size:8.24px;line-height:8.24px;color:#f2f5fa;font-weight:normal;font-style:normal;white-space:nowrap;transform:scaleX(0.9037);transform-origin:0 0;-webkit-text-stroke:0.12px #f2f5fa;">Dosya</div>
<div id="t2" style="position:absolute;left:51.70px;top:25.000px;font-size:8.24px;line-height:8.24px;color:#3c3c3c;font-weight:normal;font-style:normal;white-space:nowrap;transform:scaleX(0.8969);transform-origin:0 0;-webkit-text-stroke:0.12px #3c3c3c;">Giriş</div>
<div id="t3" style="position:absolute;left:85.50px;top:25.000px;font-size:8.24px;line-height:8.24px;color:#f2f5fa;font-weight:normal;font-style:normal;white-space:nowrap;transform:scaleX(0.9433);transform-origin:0 0;-webkit-text-stroke:0.12px #f2f5fa;">Ekle</div>
<div id="t4" style="position:absolute;left:119.40px;top:25.000px;font-size:8.24px;line-height:8.24px;color:#f2f5fa;font-weight:normal;font-style:normal;white-space:nowrap;transform:scaleX(0.8730);transform-origin:0 0;-webkit-text-stroke:0.12px #f2f5fa;">Tasarım</div>
<div id="t5" style="position:absolute;left:163.90px;top:25.000px;font-size:8.24px;line-height:8.24px;color:#f2f5fa;font-weight:normal;font-style:normal;white-space:nowrap;transform:scaleX(0.9022);transform-origin:0 0;-webkit-text-stroke:0.12px #f2f5fa;">Sayfa Düzeni</div>
<div id="t6" style="position:absolute;left:227.50px;top:25.000px;font-size:8.24px;line-height:8.24px;color:#f2f5fa;font-weight:normal;font-style:normal;white-space:nowrap;transform:scaleX(0.9044);transform-origin:0 0;-webkit-text-stroke:0.12px #f2f5fa;">Başvurular</div>
<div id="t7" style="position:absolute;left:282.50px;top:25.000px;font-size:8.24px;line-height:8.24px;color:#f2f5fa;font-weight:normal;font-style:normal;white-space:nowrap;transform:scaleX(0.8965);transform-origin:0 0;-webkit-text-stroke:0.12px #f2f5fa;">Postalar</div>
<div id="t8" style="position:absolute;left:328.30px;top:25.000px;font-size:8.24px;line-height:8.24px;color:#f2f5fa;font-weight:normal;font-style:normal;white-space:nowrap;transform:scaleX(0.9311);transform-origin:0 0;-webkit-text-stroke:0.12px #f2f5fa;">Gözden Geçir</div>
<div id="t9" style="position:absolute;left:393.30px;top:25.000px;font-size:8.24px;line-height:8.24px;color:#f2f5fa;font-weight:normal;font-style:normal;white-space:nowrap;transform:scaleX(0.9920);transform-origin:0 0;-webkit-text-stroke:0.12px #f2f5fa;">Görünüm</div>
<div id="t10" style="position:absolute;left:457.50px;top:25.000px;font-size:8.24px;line-height:8.24px;color:#c3d2ea;font-weight:normal;font-style:normal;white-space:nowrap;transform:scaleX(0.9428);transform-origin:0 0;-webkit-text-stroke:0.12px #c3d2ea;">Ne yapmak istediğinizi söyleyin...</div>
<div id="t11" style="position:absolute;left:798.00px;top:25.000px;font-size:8.24px;line-height:8.24px;color:#f2f5fa;font-weight:normal;font-style:normal;white-space:nowrap;transform:scaleX(0.9857);transform-origin:0 0;-webkit-text-stroke:0.12px #f2f5fa;">Oturum Aç</div>
<div id="t12" style="position:absolute;left:860.30px;top:25.000px;font-size:8.24px;line-height:8.24px;color:#f2f5fa;font-weight:normal;font-style:normal;white-space:nowrap;transform:scaleX(0.9019);transform-origin:0 0;-webkit-text-stroke:0.12px #f2f5fa;">Paylaş</div>
<div id="t13" style="position:absolute;left:5.60px;top:65.000px;font-size:7.82px;line-height:7.82px;color:#444444;font-weight:normal;font-style:normal;white-space:nowrap;transform:scaleX(0.9721);transform-origin:0 0;-webkit-text-stroke:0.12px #444444;">Yapıştır</div>
<div id="t14" style="position:absolute;left:47.80px;top:43.000px;font-size:7.82px;line-height:7.82px;color:#a8a8a8;font-weight:normal;font-style:normal;white-space:nowrap;transform:scaleX(0.8176);transform-origin:0 0;-webkit-text-stroke:0.12px #a8a8a8;">Kes</div>
<div id="t15" style="position:absolute;left:47.80px;top:58.000px;font-size:7.82px;line-height:7.82px;color:#a8a8a8;font-weight:normal;font-style:normal;white-space:nowrap;transform:scaleX(0.9635);transform-origin:0 0;-webkit-text-stroke:0.12px #a8a8a8;">Kopyala</div>
<div id="t16" style="position:absolute;left:47.80px;top:73.000px;font-size:7.82px;line-height:7.82px;color:#444444;font-weight:normal;font-style:normal;white-space:nowrap;transform:scaleX(0.9761);transform-origin:0 0;-webkit-text-stroke:0.12px #444444;">Biçim Boyacısı</div>
<div id="t17" style="position:absolute;left:38.90px;top:88.000px;font-size:7.54px;line-height:7.54px;color:#555;font-weight:normal;font-style:normal;white-space:nowrap;transform:scaleX(0.9829);transform-origin:0 0;-webkit-text-stroke:0.12px #555;">Pano</div>
<div id="t18" style="position:absolute;left:110.00px;top:48.000px;font-size:7.82px;line-height:7.82px;color:#444444;font-weight:normal;font-style:normal;white-space:nowrap;-webkit-text-stroke:0.12px #444444;">Arial</div>
<div id="t19" style="position:absolute;left:167.80px;top:48.000px;font-size:7.82px;line-height:7.82px;color:#444444;font-weight:normal;font-style:normal;white-space:nowrap;transform:scaleX(0.8914);transform-origin:0 0;-webkit-text-stroke:0.12px #444444;">12</div>
<div id="t20" style="position:absolute;left:171.80px;top:88.000px;font-size:7.54px;line-height:7.54px;color:#555;font-weight:normal;font-style:normal;white-space:nowrap;transform:scaleX(0.9775);transform-origin:0 0;-webkit-text-stroke:0.12px #555;">Yazı Tipi</div>
<div id="t21" style="position:absolute;left:331.70px;top:88.000px;font-size:7.54px;line-height:7.54px;color:#555;font-weight:normal;font-style:normal;white-space:nowrap;transform:scaleX(0.9792);transform-origin:0 0;-webkit-text-stroke:0.12px #555;">Paragraf</div>
<div id="t22" style="position:absolute;left:608.90px;top:88.000px;font-size:7.54px;line-height:7.54px;color:#555;font-weight:normal;font-style:normal;white-space:nowrap;transform:scaleX(1.0033);transform-origin:0 0;-webkit-text-stroke:0.12px #555;">Stiller</div>
<div id="t23" style="position:absolute;left:829.80px;top:88.000px;font-size:7.54px;line-height:7.54px;color:#555;font-weight:normal;font-style:normal;white-space:nowrap;transform:scaleX(0.9625);transform-origin:0 0;-webkit-text-stroke:0.12px #555;">Düzenleme</div>
<div id="t24" style="position:absolute;left:436.70px;top:68.000px;font-size:7.54px;line-height:7.54px;color:#555;font-weight:normal;font-style:normal;white-space:nowrap;transform:scaleX(1.0430);transform-origin:0 0;-webkit-text-stroke:0.12px #555;">¶ Normal</div>
<div id="t25" style="position:absolute;left:480.00px;top:68.000px;font-size:7.54px;line-height:7.54px;color:#555;font-weight:normal;font-style:normal;white-space:nowrap;transform:scaleX(1.0359);transform-origin:0 0;-webkit-text-stroke:0.12px #555;">¶ Aralık Yok</div>
<div id="t26" style="position:absolute;left:533.90px;top:68.000px;font-size:7.54px;line-height:7.54px;color:#555;font-weight:normal;font-style:normal;white-space:nowrap;transform:scaleX(0.9544);transform-origin:0 0;-webkit-text-stroke:0.12px #555;">Başlık 1</div>
<div id="t27" style="position:absolute;left:581.70px;top:68.000px;font-size:7.54px;line-height:7.54px;color:#555;font-weight:normal;font-style:normal;white-space:nowrap;transform:scaleX(0.9544);transform-origin:0 0;-webkit-text-stroke:0.12px #555;">Başlık 2</div>
<div id="t28" style="position:absolute;left:621.10px;top:68.000px;font-size:7.54px;line-height:7.54px;color:#555;font-weight:normal;font-style:normal;white-space:nowrap;transform:scaleX(0.9644);transform-origin:0 0;-webkit-text-stroke:0.12px #555;">Konu Başlı...</div>
<div id="t29" style="position:absolute;left:677.20px;top:68.000px;font-size:7.54px;line-height:7.54px;color:#555;font-weight:normal;font-style:normal;white-space:nowrap;transform:scaleX(1.0361);transform-origin:0 0;-webkit-text-stroke:0.12px #555;">Altyazı</div>
<div id="t30" style="position:absolute;left:715.60px;top:68.000px;font-size:7.54px;line-height:7.54px;color:#555;font-weight:normal;font-style:normal;white-space:nowrap;transform:scaleX(1.0288);transform-origin:0 0;-webkit-text-stroke:0.12px #555;">Hafif Vurg...</div>
<div id="t31" style="position:absolute;left:773.30px;top:68.000px;font-size:7.54px;line-height:7.54px;color:#555;font-weight:normal;font-style:normal;white-space:nowrap;transform:scaleX(1.0715);transform-origin:0 0;-webkit-text-stroke:0.12px #555;">Vurgu</div>
<div id="t32" style="position:absolute;left:839.60px;top:42.000px;font-size:7.82px;line-height:7.82px;color:#444444;font-weight:normal;font-style:normal;white-space:nowrap;transform:scaleX(1.0777);transform-origin:0 0;-webkit-text-stroke:0.12px #444444;">Bul</div>
<div id="t33" style="position:absolute;left:839.60px;top:58.000px;font-size:7.82px;line-height:7.82px;color:#444444;font-weight:normal;font-style:normal;white-space:nowrap;transform:scaleX(0.9939);transform-origin:0 0;-webkit-text-stroke:0.12px #444444;">Değiştir</div>
<div id="t34" style="position:absolute;left:839.60px;top:72.000px;font-size:7.82px;line-height:7.82px;color:#444444;font-weight:normal;font-style:normal;white-space:nowrap;transform:scaleX(0.9421);transform-origin:0 0;-webkit-text-stroke:0.12px #444444;">Seç</div>
<div id="t35" style="position:absolute;left:433.30px;top:53.000px;font-size:6.70px;line-height:6.70px;color:#222;font-weight:bold;font-style:normal;white-space:nowrap;transform:scaleX(1.1616);transform-origin:0 0;-webkit-text-stroke:0.12px #222;">AaÇçĞğHı</div>
<div id="t36" style="position:absolute;left:480.60px;top:53.000px;font-size:6.70px;line-height:6.70px;color:#222;font-weight:bold;font-style:normal;white-space:nowrap;transform:scaleX(1.1585);transform-origin:0 0;-webkit-text-stroke:0.12px #222;">AaÇçĞğHı</div>
<div id="t37" style="position:absolute;left:528.30px;top:50.000px;font-size:11.45px;line-height:11.45px;color:#6b9ace;font-weight:normal;font-style:normal;white-space:nowrap;transform:scaleX(1.0512);transform-origin:0 0;">AaÇçĞ</div>
<div id="t38" style="position:absolute;left:575.60px;top:51.000px;font-size:9.78px;line-height:9.78px;color:#6596c9;font-weight:normal;font-style:normal;white-space:nowrap;transform:scaleX(1.0598);transform-origin:0 0;-webkit-text-stroke:0.1px #6596c9;">AaÇçĞğ</div>
<div id="t39" style="position:absolute;left:622.30px;top:45.000px;font-size:18.44px;line-height:18.44px;color:#333;font-weight:normal;font-style:normal;white-space:nowrap;transform:scaleX(1.1046);transform-origin:0 0;-webkit-text-stroke:0.35px #ffffff;">AaÇ</div>
<div id="t40" style="position:absolute;left:670.00px;top:52.000px;font-size:7.26px;line-height:7.26px;color:#666;font-weight:normal;font-style:normal;white-space:nowrap;transform:scaleX(0.9806);transform-origin:0 0;letter-spacing:1px;-webkit-text-stroke:0.12px #666;">AaÇçĞğH</div>
<div id="t41" style="position:absolute;left:717.20px;top:52.000px;font-size:7.26px;line-height:7.26px;color:#444;font-weight:normal;font-style:italic;white-space:nowrap;transform:scaleX(1.1269);transform-origin:0 0;-webkit-text-stroke:0.12px #444;">AaÇçĞğHı</div>
<div id="t42" style="position:absolute;left:763.90px;top:52.000px;font-size:7.26px;line-height:7.26px;color:#222;font-weight:bold;font-style:italic;white-space:nowrap;transform:scaleX(1.1168);transform-origin:0 0;-webkit-text-stroke:0.12px #222;">AaÇçĞğHı</div>
<div id="t43" style="position:absolute;left:5.80px;top:466.000px;font-size:7.40px;line-height:7.40px;color:#4a4a4a;font-weight:normal;font-style:normal;white-space:nowrap;transform:scaleX(0.9888);transform-origin:0 0;-webkit-text-stroke:0.12px #4a4a4a;">Sayfa 1/5</div>
<div id="t44" style="position:absolute;left:49.10px;top:466.000px;font-size:7.40px;line-height:7.40px;color:#4a4a4a;font-weight:normal;font-style:normal;white-space:nowrap;transform:scaleX(0.9729);transform-origin:0 0;-webkit-text-stroke:0.12px #4a4a4a;">1720 sözcük</div>
<div id="t45" style="position:absolute;left:873.30px;top:466.000px;font-size:7.40px;line-height:7.40px;color:#4a4a4a;font-weight:normal;font-style:normal;white-space:nowrap;transform:scaleX(0.9719);transform-origin:0 0;-webkit-text-stroke:0.12px #4a4a4a;">%100</div>
<div id="t46" style="position:absolute;left:700.00px;top:488.000px;font-size:8.80px;line-height:8.80px;color:#f4f7fb;font-weight:normal;font-style:normal;white-space:nowrap;transform:scaleX(1.0241);transform-origin:0 0;-webkit-text-stroke:0.12px #f4f7fb;">9°C</div>
<div id="t47" style="position:absolute;left:720.00px;top:488.000px;font-size:8.80px;line-height:8.80px;color:#f4f7fb;font-weight:normal;font-style:normal;white-space:nowrap;transform:scaleX(1.0129);transform-origin:0 0;-webkit-text-stroke:0.12px #f4f7fb;">Güneşli</div>
<div id="t48" style="position:absolute;left:832.70px;top:480.000px;font-size:7.82px;line-height:7.82px;color:#eef2f8;font-weight:normal;font-style:normal;white-space:nowrap;transform:scaleX(0.8766);transform-origin:0 0;-webkit-text-stroke:0.12px #eef2f8;">10:34</div>
<div id="t49" style="position:absolute;left:824.00px;top:492.000px;font-size:7.82px;line-height:7.82px;color:#eef2f8;font-weight:normal;font-style:normal;white-space:nowrap;transform:scaleX(0.9017);transform-origin:0 0;-webkit-text-stroke:0.12px #eef2f8;">17.02.2022</div>
<div style="position:absolute;left:305px;top:444.5px;width:287.5px;height:25.5px;background:#ffffff;box-shadow:0 1px 3px rgba(0,0,0,0.35);"></div>
<div style="position:absolute;left:312.5px;top:454px;width:1px;height:6.5px;background:#c4c4c4;"></div>
<div style="position:absolute;left:315px;top:454px;width:1px;height:6.5px;background:#c4c4c4;"></div>
<div style="position:absolute;left:475.8px;top:447.2px;width:86.7px;height:20.5px;background:#1a73e8;border-radius:2px;"></div>
<div id="t50" style="position:absolute;left:322.50px;top:454.000px;font-size:6.98px;line-height:6.98px;color:#4a4a4a;font-weight:normal;font-style:normal;white-space:nowrap;transform:scaleX(1.1086);transform-origin:0 0;-webkit-text-stroke:0.12px #4a4a4a;">teams.microsoft.com ekranınızı paylaşıyor.</div>
<div id="t51" style="position:absolute;left:486.70px;top:454.000px;font-size:7.26px;line-height:7.26px;color:#ffffff;font-weight:bold;font-style:normal;white-space:nowrap;transform:scaleX(1.0110);transform-origin:0 0;-webkit-text-stroke:0.12px #ffffff;">Paylaşmayı durdur</div>
<div id="t52" style="position:absolute;left:570.00px;top:454.000px;font-size:7.26px;line-height:7.26px;color:#6f93d8;font-weight:normal;font-style:normal;white-space:nowrap;transform:scaleX(1.0470);transform-origin:0 0;-webkit-text-stroke:0.12px #6f93d8;">Gizle</div>
</div></body></html>
